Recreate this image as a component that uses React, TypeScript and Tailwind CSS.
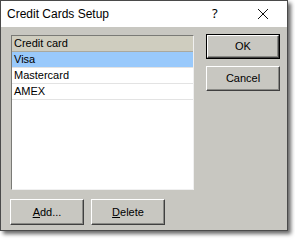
import React from "react";

const btn3d =
  "relative bg-[#c8c7c1] border border-t-white border-l-white border-r-[#404040] border-b-[#404040] shadow-[inset_-1px_-1px_0_#8a8a86] flex items-center justify-center text-[11px] text-black";

function Btn({ children, w, h, def }: { children: React.ReactNode; w: string; h: string; def?: boolean }) {
  if (def) {
    return (
      <div className={`border border-black ${w} ${h} flex`}>
        <div className={`${btn3d} flex-1`}>{children}</div>
      </div>
    );
  }
  return <div className={`${btn3d} ${w} ${h}`}>{children}</div>;
}

export default function App() {
  const rows = ["Mastercard", "AMEX"];
  return (
    <div className="w-[295px] h-[240px] bg-white" style={{ fontFamily: "'Liberation Sans', Arial, sans-serif" }}>
      <div className="w-[288px] h-[231px] border border-[#4a4a4a] flex flex-col shadow-[3px_3px_4px_rgba(0,0,0,0.6)]">
        <div className="h-[26px] bg-white flex items-center pl-[6px] shrink-0">
          <span className="text-[12px] text-black flex-1">Credit Cards Setup</span>
          <span className="text-[13px] text-black w-[14px] mr-[31px]" style={{ fontFamily: "'Noto Sans', sans-serif" }}>?</span>
          <svg width="12" height="12" viewBox="0 0 12 12" className="mr-[18px]">
            <path d="M1 1 L11 11 M11 1 L1 11" stroke="#111" strokeWidth="1" />
          </svg>
        </div>
        <div className="flex-1 bg-[#c8c7c1] flex pt-[8px] pl-[10px]">
          <div className="w-[183px] flex flex-col">
            <div className="h-[155px] bg-white border border-t-[#7a7a76] border-l-[#7a7a76] border-r-[#f0f0f0] border-b-[#f0f0f0] flex flex-col">
              <div className="h-[16px] bg-[#cfcdbf] border-b border-[#a9a89e] px-[2px] text-[11px] leading-[15px] text-black">
                Credit card
              </div>
              <div className="h-[16px] bg-[#99c9fb] border-b border-[#e3e3e3] px-[2px] text-[11px] leading-[15px] text-black">
                Visa
              </div>
              {rows.map((r) => (
                <div key={r} className="h-[16px] border-b border-[#e3e3e3] px-[2px] text-[11px] leading-[15px] text-black">
                  {r}
                </div>
              ))}
            </div>
            <div className="flex gap-[7px] mt-[9px] -ml-[1px]">
              <Btn w="w-[74px]" h="h-[26px]">
                <span>
                  <u>A</u>dd...
                </span>
              </Btn>
              <Btn w="w-[74px]" h="h-[26px]">
                <span>
                  <u>D</u>elete
                </span>
              </Btn>
            </div>
          </div>
          <div className="ml-[12px] flex flex-col gap-[7px] -mt-[1px]">
            <Btn w="w-[74px]" h="h-[25px]" def>
              OK
            </Btn>
            <Btn w="w-[74px]" h="h-[25px]">
              Cancel
            </Btn>
          </div>
        </div>
      </div>
    </div>
  );
}
